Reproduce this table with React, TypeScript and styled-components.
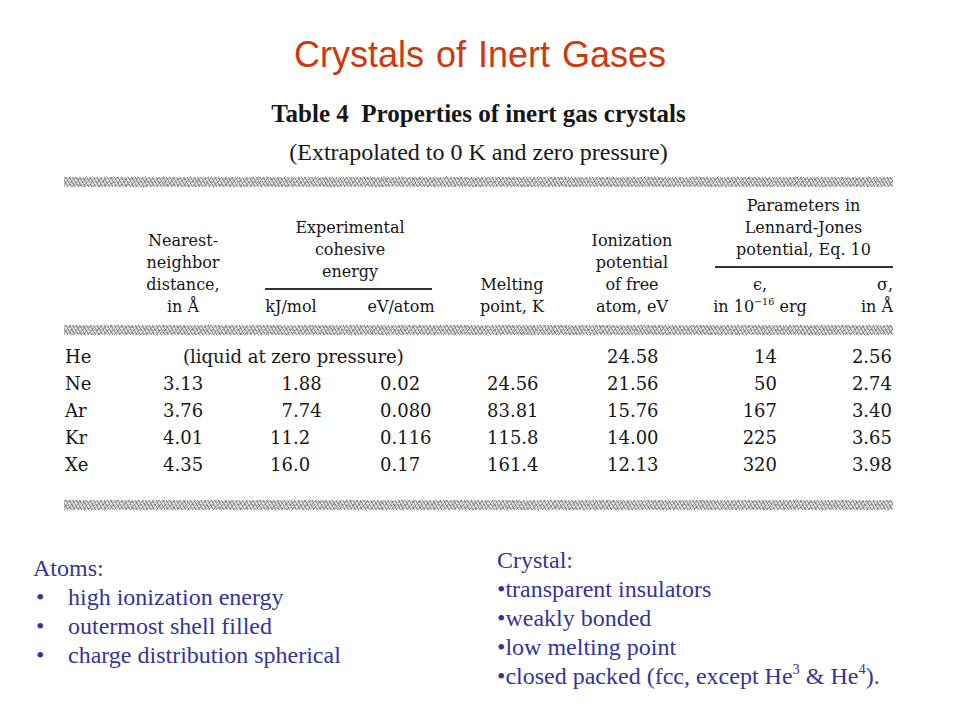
import React from 'react';
import styled, { createGlobalStyle } from 'styled-components';

const Global = createGlobalStyle`
  html, body { margin: 0; padding: 0; background: #ffffff; }
  body { width: 960px; height: 720px; overflow: hidden; }
`;

const COLS = [66, 110, 110, 110, 110, 130, 120, 73];

const Slide = styled.div`
  width: 960px;
  height: 720px;
  box-sizing: border-box;
  padding-top: 34px;
  display: flex;
  flex-direction: column;
`;

const Title = styled.h1`
  margin: 0;
  text-align: center;
  font-family: "Liberation Sans", Arial, sans-serif;
  font-weight: normal;
  font-size: 36px;
  line-height: 41px;
  color: #cc3a0c;
  word-spacing: 2px;
`;

const Figure = styled.div`
  margin: 26px 0 0 64px;
  width: 829px;
  display: flex;
  flex-direction: column;
  color: #161616;
`;

const Caption = styled.div<{ $bold?: boolean }>`
  font-family: "Liberation Serif", "Times New Roman", serif;
  font-weight: ${(p) => (p.$bold ? 'bold' : 'normal')};
  font-size: ${(p) => (p.$bold ? 25 : 24)}px;
  line-height: 26px;
  text-align: center;
  margin-bottom: 12px;
  white-space: pre;
`;

const Hatch = styled.div`
  height: 10px;
  background-color: #d4d4d4;
  background-image:
    repeating-linear-gradient(60deg, rgba(90,90,90,0.55) 0 1px, transparent 1px 3px),
    repeating-linear-gradient(-50deg, rgba(120,120,120,0.45) 0 1px, transparent 1px 4px),
    repeating-linear-gradient(0deg, rgba(255,255,255,0.5) 0 1px, transparent 1px 3px);
`;

const Grid = styled.div`
  display: grid;
  grid-template-columns: ${COLS.map((c) => c + 'px').join(' ')};
  font-family: "DejaVu Serif", serif;
`;

const HeadGrid = styled(Grid)`
  align-items: end;
  padding: 8px 0 7px;
  font-size: 16px;
  line-height: 22px;
`;

const HeadCell = styled.div<{ $align?: string; $shift?: number }>`
  text-align: ${(p) => p.$align || 'center'};
  transform: translateX(${(p) => p.$shift || 0}px);
  white-space: nowrap;
`;

const Group = styled.div`
  grid-column: span 2;
  display: flex;
  flex-direction: column;
`;

const GroupTitle = styled.div<{ $shift?: number }>`
  text-align: center;
  padding-left: ${(p) => (p.$shift || 0) * 2}px;
  white-space: nowrap;
`;

const GroupRule = styled.div<{ $left: number; $right: number }>`
  height: 2px;
  background: #333;
  margin: 5px ${(p) => p.$right}px 6px ${(p) => p.$left}px;
`;

const SubGrid = styled.div<{ $cols: string }>`
  display: grid;
  grid-template-columns: ${(p) => p.$cols};
  align-items: end;
`;

const Body = styled(Grid)`
  padding: 8px 0 22px;
  font-size: 18px;
  line-height: 27px;
`;

const Cell = styled.div<{ $align?: string; $padL?: number; $padR?: number; $span?: number }>`
  text-align: ${(p) => p.$align || 'left'};
  padding-left: ${(p) => p.$padL || 0}px;
  padding-right: ${(p) => p.$padR || 0}px;
  grid-column: span ${(p) => p.$span || 1};
  white-space: nowrap;
`;

const Decimal = styled.div`
  display: flex;
  white-space: nowrap;
`;

const IntPart = styled.span<{ $w: number }>`
  display: inline-block;
  width: ${(p) => p.$w}px;
  text-align: right;
`;

const Sup = styled.sup`
  font-size: 0.6em;
  line-height: 0;
  vertical-align: 0.7em;
`;

const Notes = styled.div`
  margin-top: 36px;
  display: flex;
  font-family: "Liberation Serif", "Times New Roman", serif;
  font-size: 24px;
  line-height: 29px;
  color: #34349a;
`;

const NoteCol = styled.div<{ $left: number; $top: number; $width: number }>`
  margin-left: ${(p) => p.$left}px;
  padding-top: ${(p) => p.$top}px;
  width: ${(p) => p.$width}px;
  display: flex;
  flex-direction: column;
`;

const NoteLine = styled.div`
  white-space: nowrap;
`;

const Bullet = styled.div`
  display: flex;
  white-space: nowrap;
`;

const BulletMark = styled.span<{ $w: number }>`
  display: inline-block;
  width: ${(p) => p.$w}px;
  padding-left: 3px;
  box-sizing: border-box;
`;

type Row = {
  el: string;
  nn?: string;
  kj?: string;
  ev?: string;
  mp?: string;
  ion: string;
  eps: string;
  sig: string;
};

const rows: Row[] = [
  { el: 'He', ion: '24.58', eps: '14', sig: '2.56' },
  { el: 'Ne', nn: '3.13', kj: '1.88', ev: '0.02', mp: '24.56', ion: '21.56', eps: '50', sig: '2.74' },
  { el: 'Ar', nn: '3.76', kj: '7.74', ev: '0.080', mp: '83.81', ion: '15.76', eps: '167', sig: '3.40' },
  { el: 'Kr', nn: '4.01', kj: '11.2', ev: '0.116', mp: '115.8', ion: '14.00', eps: '225', sig: '3.65' },
  { el: 'Xe', nn: '4.35', kj: '16.0', ev: '0.17', mp: '161.4', ion: '12.13', eps: '320', sig: '3.98' },
];

const DecimalNum: React.FC<{ v: string; w: number }> = ({ v, w }) => {
  const i = v.indexOf('.');
  return (
    <Decimal>
      <IntPart $w={w}>{v.slice(0, i)}</IntPart>
      <span>{v.slice(i)}</span>
    </Decimal>
  );
};

export default function App() {
  return (
    <>
      <Global />
      <Slide>
        <Title>Crystals of Inert Gases</Title>
        <Figure>
          <Caption $bold>{'Table 4  Properties of inert gas crystals'}</Caption>
          <Caption>(Extrapolated to 0 K and zero pressure)</Caption>
          <Hatch />
          <HeadGrid>
            <div />
            <HeadCell $shift={-2}>
              Nearest-
              <br />
              neighbor
              <br />
              distance,
              <br />
              in Å
            </HeadCell>
            <Group>
              <GroupTitle $shift={-3}>
                Experimental
                <br />
                cohesive
                <br />
                energy
              </GroupTitle>
              <GroupRule $left={25} $right={28} />
              <SubGrid $cols="110px 110px">
                <HeadCell $shift={-4}>kJ/mol</HeadCell>
                <HeadCell $shift={-4}>eV/atom</HeadCell>
              </SubGrid>
            </Group>
            <HeadCell $shift={-3}>
              Melting
              <br />
              point, K
            </HeadCell>
            <HeadCell $shift={-3}>
              Ionization
              <br />
              potential
              <br />
              of free
              <br />
              atom, eV
            </HeadCell>
            <Group>
              <GroupTitle $shift={7}>
                Parameters in
                <br />
                Lennard-Jones
                <br />
                potential, Eq. 10
              </GroupTitle>
              <GroupRule $left={15} $right={0} />
              <SubGrid $cols="120px 73px">
                <HeadCell>
                  ϵ,
                  <br />
                  in 10<Sup>−16</Sup> erg
                </HeadCell>
                <HeadCell $align="right">
                  σ,
                  <br />
                  in Å
                </HeadCell>
              </SubGrid>
            </Group>
          </HeadGrid>
          <Hatch />
          <Body>
            {rows.map((r) => (
              <React.Fragment key={r.el}>
                <Cell $padL={1}>{r.el}</Cell>
                {r.nn ? (
                  <>
                    <Cell $padL={33}>{r.nn}</Cell>
                    <Cell>
                      <DecimalNum v={r.kj as string} w={53} />
                    </Cell>
                    <Cell $padL={30}>{r.ev}</Cell>
                    <Cell $padL={27}>{r.mp}</Cell>
                  </>
                ) : (
                  <>
                    <Cell $span={3} $padL={53}>
                      (liquid at zero pressure)
                    </Cell>
                    <Cell />
                  </>
                )}
                <Cell $padL={37}>{r.ion}</Cell>
                <Cell $align="right" $padR={43}>
                  {r.eps}
                </Cell>
                <Cell $align="right" $padR={1}>
                  {r.sig}
                </Cell>
              </React.Fragment>
            ))}
          </Body>
          <Hatch />
        </Figure>
        <Notes>
          <NoteCol $left={33} $top={8} $width={464}>
            <NoteLine>Atoms:</NoteLine>
            <Bullet>
              <BulletMark $w={35}>•</BulletMark>high ionization energy
            </Bullet>
            <Bullet>
              <BulletMark $w={35}>•</BulletMark>outermost shell filled
            </Bullet>
            <Bullet>
              <BulletMark $w={35}>•</BulletMark>charge distribution spherical
            </Bullet>
          </NoteCol>
          <NoteCol $left={0} $top={0} $width={420}>
            <NoteLine>Crystal:</NoteLine>
            <NoteLine>•transparent insulators</NoteLine>
            <NoteLine>•weakly bonded</NoteLine>
            <NoteLine>•low melting point</NoteLine>
            <NoteLine>
              •closed packed (fcc, except He<Sup>3</Sup> &amp; He<Sup>4</Sup>).
            </NoteLine>
          </NoteCol>
        </Notes>
      </Slide>
    </>
  );
}
